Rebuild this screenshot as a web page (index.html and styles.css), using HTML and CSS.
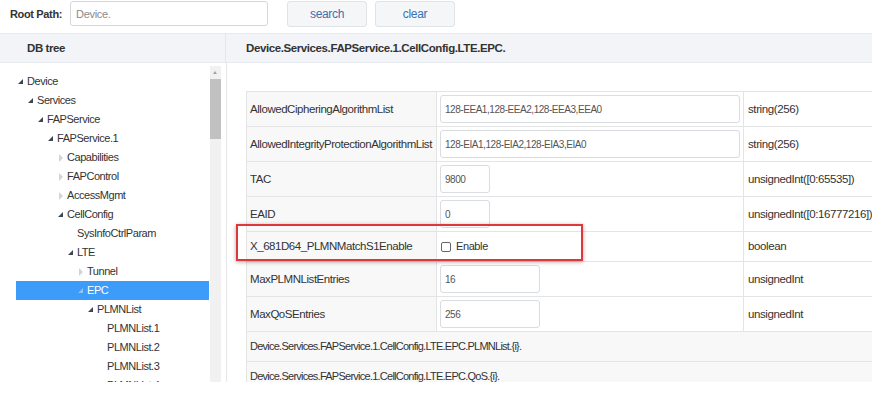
FILE: index.html
```html
<!doctype html>
<html>
	<head>
		<title>DB tree</title>
		<meta charset="utf-8" />
		<link rel="stylesheet" href="styles.css">
	</head>

	<body>

		<div class="toolbar">
			<span class="root_label">Root Path:</span>
			<input class="root_input" type="text" placeholder="Device.">
			<div class="btn">search</div>
			<div class="btn">clear</div>
		</div>

		<div class="main">

			<div class="head head_left">DB tree</div>
			<div class="head head_right">Device.Services.FAPService.1.CellConfig.LTE.EPC.</div>

			<div class="tree_panel">
				<div class="tree">
					<div class="node d0"><span class="icon open"></span>Device</div>
					<div class="node d1"><span class="icon open"></span>Services</div>
					<div class="node d2"><span class="icon open"></span>FAPService</div>
					<div class="node d3"><span class="icon open"></span>FAPService.1</div>
					<div class="node d4"><span class="icon closed"></span>Capabilities</div>
					<div class="node d4"><span class="icon closed"></span>FAPControl</div>
					<div class="node d4"><span class="icon closed"></span>AccessMgmt</div>
					<div class="node d4"><span class="icon open"></span>CellConfig</div>
					<div class="node d5"><span class="icon"></span>SysInfoCtrlParam</div>
					<div class="node d5"><span class="icon open"></span>LTE</div>
					<div class="node d6"><span class="icon closed"></span>Tunnel</div>
					<div class="node d6 selected"><span class="icon open"></span>EPC</div>
					<div class="node d7"><span class="icon open"></span>PLMNList</div>
					<div class="node d8"><span class="icon"></span>PLMNList.1</div>
					<div class="node d8"><span class="icon"></span>PLMNList.2</div>
					<div class="node d8"><span class="icon"></span>PLMNList.3</div>
					<div class="node d8"><span class="icon"></span>PLMNList.4</div>
				</div>
				<div class="scrollbar">
					<div class="arrow"></div>
					<div class="thumb"></div>
				</div>
			</div>

			<div class="content">
				<table class="params">
					<tr>
						<td class="name">AllowedCipheringAlgorithmList</td>
						<td class="value"><input class="field wide" type="text" value="128-EEA1,128-EEA2,128-EEA3,EEA0"></td>
						<td class="type">string(256)</td>
					</tr>
					<tr>
						<td class="name">AllowedIntegrityProtectionAlgorithmList</td>
						<td class="value"><input class="field wide" type="text" value="128-EIA1,128-EIA2,128-EIA3,EIA0"></td>
						<td class="type">string(256)</td>
					</tr>
					<tr>
						<td class="name">TAC</td>
						<td class="value"><input class="field small" type="text" value="9800"></td>
						<td class="type">unsignedInt([0:65535])</td>
					</tr>
					<tr>
						<td class="name">EAID</td>
						<td class="value"><input class="field small" type="text" value="0"></td>
						<td class="type">unsignedInt([0:16777216])</td>
					</tr>
					<tr>
						<td class="name">X_681D64_PLMNMatchS1Enable</td>
						<td class="value"><label class="check"><span class="box"></span>Enable</label></td>
						<td class="type">boolean</td>
					</tr>
					<tr>
						<td class="name">MaxPLMNListEntries</td>
						<td class="value"><input class="field medium" type="text" value="16"></td>
						<td class="type">unsignedInt</td>
					</tr>
					<tr>
						<td class="name">MaxQoSEntries</td>
						<td class="value"><input class="field medium" type="text" value="256"></td>
						<td class="type">unsignedInt</td>
					</tr>
					<tr>
						<td class="name path" colspan="3">Device.Services.FAPService.1.CellConfig.LTE.EPC.PLMNList.{i}.</td>
					</tr>
					<tr>
						<td class="name path" colspan="3">Device.Services.FAPService.1.CellConfig.LTE.EPC.QoS.{i}.</td>
					</tr>
				</table>

				<!-- red annotation box drawn over the enable row -->
				<div class="highlight"></div>
			</div>

		</div>

	</body>
</html>
```

FILE: styles.css
```css
body {
	margin: 0;
	background-color: #ffffff;
	font-family: "Liberation Sans", Arial, sans-serif;
	font-size: 12px;
	letter-spacing: -0.35px;
	color: #333333;
	overflow: hidden;
	height: 394px;
}

.toolbar {
	display: flex;
	align-items: center;
	height: 27px;
	padding-left: 10px;
}

.root_label {
	font-weight: bold;
	font-size: 11px;
	width: 60px;
	white-space: nowrap;
}

.root_input {
	box-sizing: border-box;
	width: 198px;
	height: 25px;
	margin: 0;
	padding: 0 5px;
	border: 1px solid #d4d7dc;
	border-radius: 3px;
	font-family: inherit;
	font-size: 11px;
	letter-spacing: -0.3px;
	color: #555555;
}

.root_input::placeholder {
	color: #8a8a8a;
}

.btn {
	box-sizing: border-box;
	width: 80px;
	height: 26px;
	line-height: 24px;
	margin-left: 8px;
	text-align: center;
	background-color: #f5f6f8;
	border: 1px solid #e0e3e8;
	border-radius: 3px;
	color: #3a6fb0;
	font-size: 12px;
}

.root_input + .btn {
	margin-left: 19px;
}

.main {
	display: grid;
	grid-template-columns: 226px 646px;
	grid-template-rows: 30px auto;
	margin-top: 6px;
	width: 872px;
}

.head {
	box-sizing: border-box;
	height: 30px;
	line-height: 28px;
	background-color: #f2f4f8;
	border-top: 1px solid #e6e9ee;
	border-bottom: 1px solid #e6e9ee;
	font-weight: bold;
	font-size: 11.5px;
	letter-spacing: -0.4px;
}

.head_left {
	padding-left: 27px;
	border-right: 1px solid #e3e6eb;
}

.head_right {
	padding-left: 20px;
}

.tree_panel {
	display: flex;
	height: 319px;
	overflow: hidden;
}

.tree {
	width: 193px;
	margin-left: 16px;
	padding-top: 9px;
}

.node {
	height: 19px;
	line-height: 19px;
	white-space: nowrap;
	font-size: 11px;
	letter-spacing: -0.45px;
	color: #333333;
}

.icon {
	display: inline-block;
	position: relative;
	width: 11px;
	height: 19px;
	vertical-align: top;
}

.icon.open::before {
	content: "";
	position: absolute;
	left: 2px;
	top: 7px;
	border-left: 5px solid transparent;
	border-bottom: 5px solid #3c4652;
}

.icon.closed::before {
	content: "";
	position: absolute;
	left: 3px;
	top: 6px;
	border-top: 4px solid transparent;
	border-bottom: 4px solid transparent;
	border-left: 4px solid #cfd5dd;
}

.d1 { padding-left: 10px; }
.d2 { padding-left: 20px; }
.d3 { padding-left: 30px; }
.d4 { padding-left: 40px; }
.d5 { padding-left: 50px; }
.d6 { padding-left: 60px; }
.d7 { padding-left: 70px; }
.d8 { padding-left: 80px; }

.selected {
	background-color: #3d9bfa;
	color: #ffffff;
}

.selected .icon.open::before {
	border-bottom-color: #8cc4fc;
}

.scrollbar {
	width: 11px;
	margin-left: 1px;
	margin-top: 3px;
	background-color: #f1f1f1;
}

.arrow {
	height: 13px;
	position: relative;
}

.arrow::before {
	content: "";
	position: absolute;
	left: 3px;
	top: 5px;
	border-left: 2.5px solid transparent;
	border-right: 2.5px solid transparent;
	border-bottom: 3px solid #a3a3a3;
}

.thumb {
	height: 60px;
	background-color: #c1c1c1;
}

.content {
	position: relative;
	border-left: 1px solid #e6e6e6;
	padding: 28px 0 0 19px;
	height: 291px;
	overflow: hidden;
}

.params {
	border-collapse: collapse;
	width: 627px;
	table-layout: fixed;
}

.params td {
	padding: 3px;
	line-height: 23px;
	border: 1px solid #e4e4e4;
	white-space: nowrap;
	overflow: hidden;
}

.params td.name {
	width: 183px;
	background-color: #f8f8f9;
	font-size: 11.5px;
	letter-spacing: -0.45px;
}

.params td.path {
	font-size: 11px;
	letter-spacing: -0.75px;
}

.params td.value {
	width: 300px;
}

.params td.type {
	padding-left: 4px;
	font-size: 11.5px;
	letter-spacing: -0.4px;
	overflow: visible;
}

.field {
	box-sizing: border-box;
	display: block;
	height: 28px;
	margin: 0;
	padding: 0 4px;
	border: 1px solid #d9dce1;
	border-radius: 3px;
	font-family: inherit;
	font-size: 10px;
	letter-spacing: -0.45px;
	color: #555555;
}

.wide {
	width: 300px;
}

.small {
	width: 50px;
}

.medium {
	width: 100px;
}

.check {
	display: flex;
	align-items: center;
	font-size: 11px;
	letter-spacing: -0.4px;
}

.box {
	box-sizing: border-box;
	width: 10px;
	height: 10px;
	margin: 0 5px 0 1px;
	border: 1px solid #666666;
	border-radius: 2px;
	background-color: #ffffff;
}

.highlight {
	position: absolute;
	left: 9px;
	top: 161px;
	width: 347px;
	height: 37px;
	box-sizing: border-box;
	border: 2px solid #e0383a;
	box-shadow: 0 1px 4px rgba(0, 0, 0, 0.35);
}
```
